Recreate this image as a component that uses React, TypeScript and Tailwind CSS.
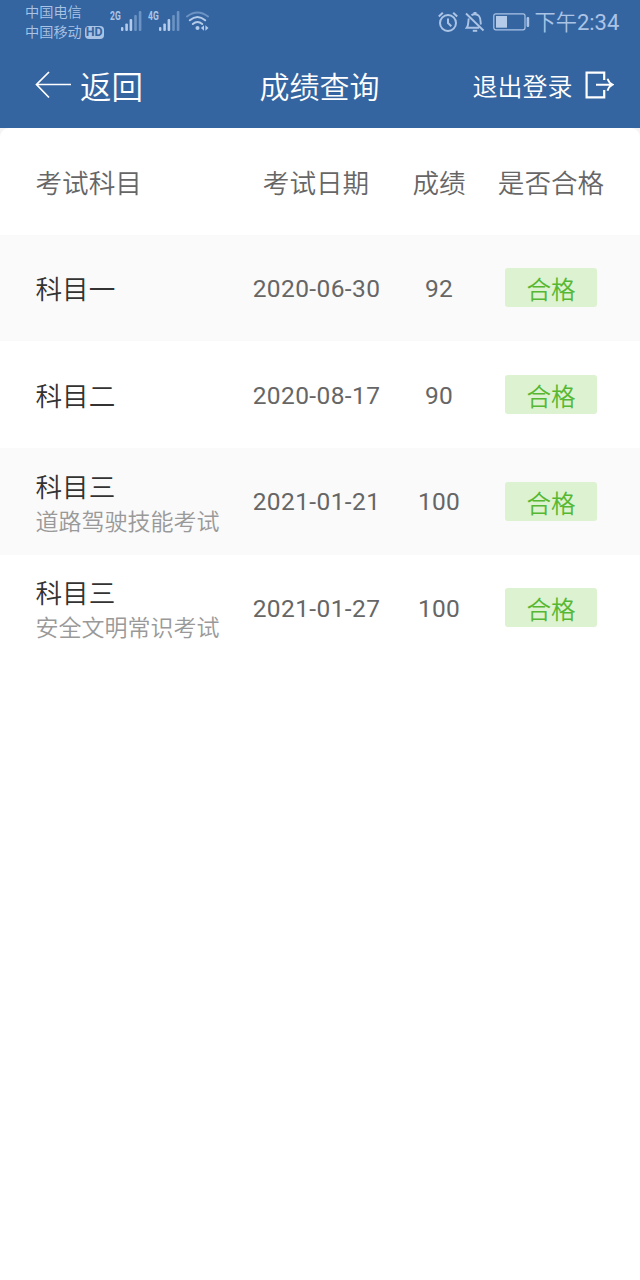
import React from "react";

type Row = { subject: string; detail?: string; date: string; score: string };

const rows: Row[] = [
  { subject: "科目一", date: "2020-06-30", score: "92" },
  { subject: "科目二", date: "2020-08-17", score: "90" },
  { subject: "科目三", detail: "道路驾驶技能考试", date: "2021-01-21", score: "100" },
  { subject: "科目三", detail: "安全文明常识考试", date: "2021-01-27", score: "100" },
];

function Signal() {
  return (
    <svg width="22" height="20" viewBox="0 0 22 20" fill="#b4cbea">
      <rect x="0" y="16" width="2.4" height="4" rx="1" />
      <rect x="4.3" y="12.5" width="2.6" height="7.5" rx="1" />
      <rect x="8.6" y="8" width="2.6" height="12" rx="1" />
      <g fill="#6c93c3">
        <rect x="13.2" y="4" width="2.6" height="16" rx="1" />
        <rect x="17.8" y="0" width="2.6" height="20" rx="1" />
      </g>
    </svg>
  );
}

function StatusBar() {
  return (
    <div className="flex h-11 justify-between pr-[21.5px] pl-[25px] text-[#abc4e6]">
      <div className="flex">
        <div className="w-[80px] pt-[1px] text-[14.2px] leading-5 font-[350] whitespace-nowrap">
          <div>中国电信</div>
          <div className="flex items-center">
            中国移动
            <span className="mt-[2px] ml-[3px] flex h-[13px] w-[19px] items-center justify-center rounded-[4px] bg-[#abc4e6] font-[Roboto] text-[12.5px] leading-none font-bold text-[#3565a0]">
              HD
            </span>
          </div>
        </div>
        <div className="flex pt-[11px] pl-[5px]">
          <span className="w-[11px] origin-left scale-x-[0.68] font-[Roboto] text-[12.5px] leading-[10px] font-bold">2G</span>
          <Signal />
          <span className="ml-[5px] w-[11px] origin-left scale-x-[0.68] font-[Roboto] text-[12.5px] leading-[10px] font-bold">4G</span>
          <Signal />
          <svg className="ml-[5px]" width="24" height="20" viewBox="0 0 24 20" fill="none" strokeWidth="2" strokeLinecap="round">
            <path d="M1 5.5Q11.5-2.5 22 5.5" stroke="#6c93c3" />
            <path d="M3.8 9.3Q11.5 2.8 19.2 9.3M6.8 13Q11.5 9 16.2 13" stroke="#b4cbea" />
            <circle cx="11.5" cy="17" r="2" fill="#b4cbea" />
            <path d="M18 14.3v5.4L14.9 17zM19.4 14.3v5.4l3.1-2.7z" fill="#b4cbea" />
          </svg>
        </div>
      </div>
      <div className="flex items-center">
        <svg width="22" height="22" viewBox="0 0 22 22" fill="none" stroke="#abc4e6" strokeWidth="2">
          <circle cx="10" cy="12" r="8" />
          <path d="M10 7.5V12l3.3 3.3M.8 5.5l4-3.8M19.2 5.5l-4-3.8" />
        </svg>
        <svg className="ml-[5px]" width="20" height="22" viewBox="0 0 20 22" fill="none" stroke="#abc4e6" strokeWidth="1.9">
          <path d="M1 2.5l17.5 17M3.8 7.5C3 10 4 14 1.7 16.8h12.5M6.5 4.2C8 3 12 2.7 14 5c2 2.4 1.3 5.5 1.9 8.5" />
          <path d="M10 1v2" strokeWidth="3" />
          <path d="M7.8 19.8h4.4" strokeWidth="2" />
        </svg>
        <svg className="ml-[8px]" width="37" height="18" viewBox="0 0 37 18">
          <rect x=".8" y=".8" width="31.2" height="16" rx="2" fill="none" stroke="#abc4e6" strokeWidth="1.2" />
          <rect x="3" y="3" width="11" height="11.7" fill="#b4cbea" />
          <rect x="33.6" y="4" width="2.6" height="10" rx="1" fill="#abc4e6" />
        </svg>
        <span className="ml-[5px] w-[84px] text-[21.2px] leading-none font-[350] whitespace-nowrap">
          下午<span className="font-[Roboto] text-[22px] font-normal">2:34</span>
        </span>
      </div>
    </div>
  );
}

function NavBar() {
  return (
    <div className="grid h-[84px] grid-cols-[220px_200px_220px] items-center text-white">
      <div className="flex items-center pl-[35px]">
        <svg className="mb-[2px]" width="37" height="28" viewBox="0 0 37 28" fill="none" stroke="white" strokeWidth="1.7">
          <path d="M36 13.5H1.5M14 1L1.5 13.5 14 26.5" />
        </svg>
        <span className="ml-[8px] pb-[2px] text-[31.5px] leading-[44px] font-[350]">返回</span>
      </div>
      <h1 className="pr-[1px] pb-[2px] text-center text-[30px] leading-[44px] font-[350]">成绩查询</h1>
      <div className="flex items-center justify-end pr-[26px]">
        <span className="pb-[2px] text-[25px] leading-[44px] font-[350]">退出登录</span>
        <svg className="mb-[2px] ml-[12.5px]" width="29" height="28" viewBox="0 0 29 28" fill="none" stroke="white" strokeWidth="2.2">
          <path d="M19.2 9V1.6H1.6v24.8h17.6V19" />
          <path d="M11 13.7h16M22.5 7.7Q24 12 27.5 13.7 24 15.4 22.5 19.7" strokeWidth="1.9" />
        </svg>
      </div>
    </div>
  );
}

const gridRow = "grid h-[106.67px] grid-cols-[206.5px_148px_98px_126px] items-center pl-[35.5px]";

export default function App() {
  return (
    <div className="min-h-[1280px] w-[640px] overflow-hidden bg-white font-['Noto_Sans_CJK_SC',sans-serif]">
      <header className="h-32 bg-[#3565a0]">
        <StatusBar />
        <NavBar />
      </header>
      <main className="bg-[#f4f4f4]">
        <div className="overflow-hidden rounded-t-[9px] bg-white">
          <div className={`${gridRow} pt-[1px] text-center text-[26.6px] font-[350] text-[#666]`}>
            <div className="text-left">考试科目</div>
            <div>考试日期</div>
            <div>成绩</div>
            <div>是否合格</div>
          </div>
          {rows.map((row, i) => (
            <div key={row.date} className={`${gridRow} text-center ${i % 2 === 0 ? "bg-[#fafafa]" : "bg-white"}`}>
              <div className="text-left whitespace-nowrap">
                <div className={`text-[26.6px] font-[350] text-[#333] ${row.detail ? "pt-[2px] leading-[35px]" : "leading-9"}`}>
                  {row.subject}
                </div>
                {row.detail && <div className="text-[23px] leading-[34px] font-[350] text-[#999]">{row.detail}</div>}
              </div>
              <div className="pt-[3px] pl-px font-[Roboto] text-[24.5px] tracking-[0.4px] text-[#666]">{row.date}</div>
              <div className="pt-[3px] font-[Roboto] text-[24.5px] tracking-[0.3px] text-[#666]">{row.score}</div>
              <div className="flex justify-center">
                <span className="flex h-[39px] w-[92px] items-center justify-center rounded-[3px] bg-[#dcf2d0] pt-px text-[24.6px] leading-none font-[350] text-[#56b832]">
                  合格
                </span>
              </div>
            </div>
          ))}
        </div>
      </main>
    </div>
  );
}
